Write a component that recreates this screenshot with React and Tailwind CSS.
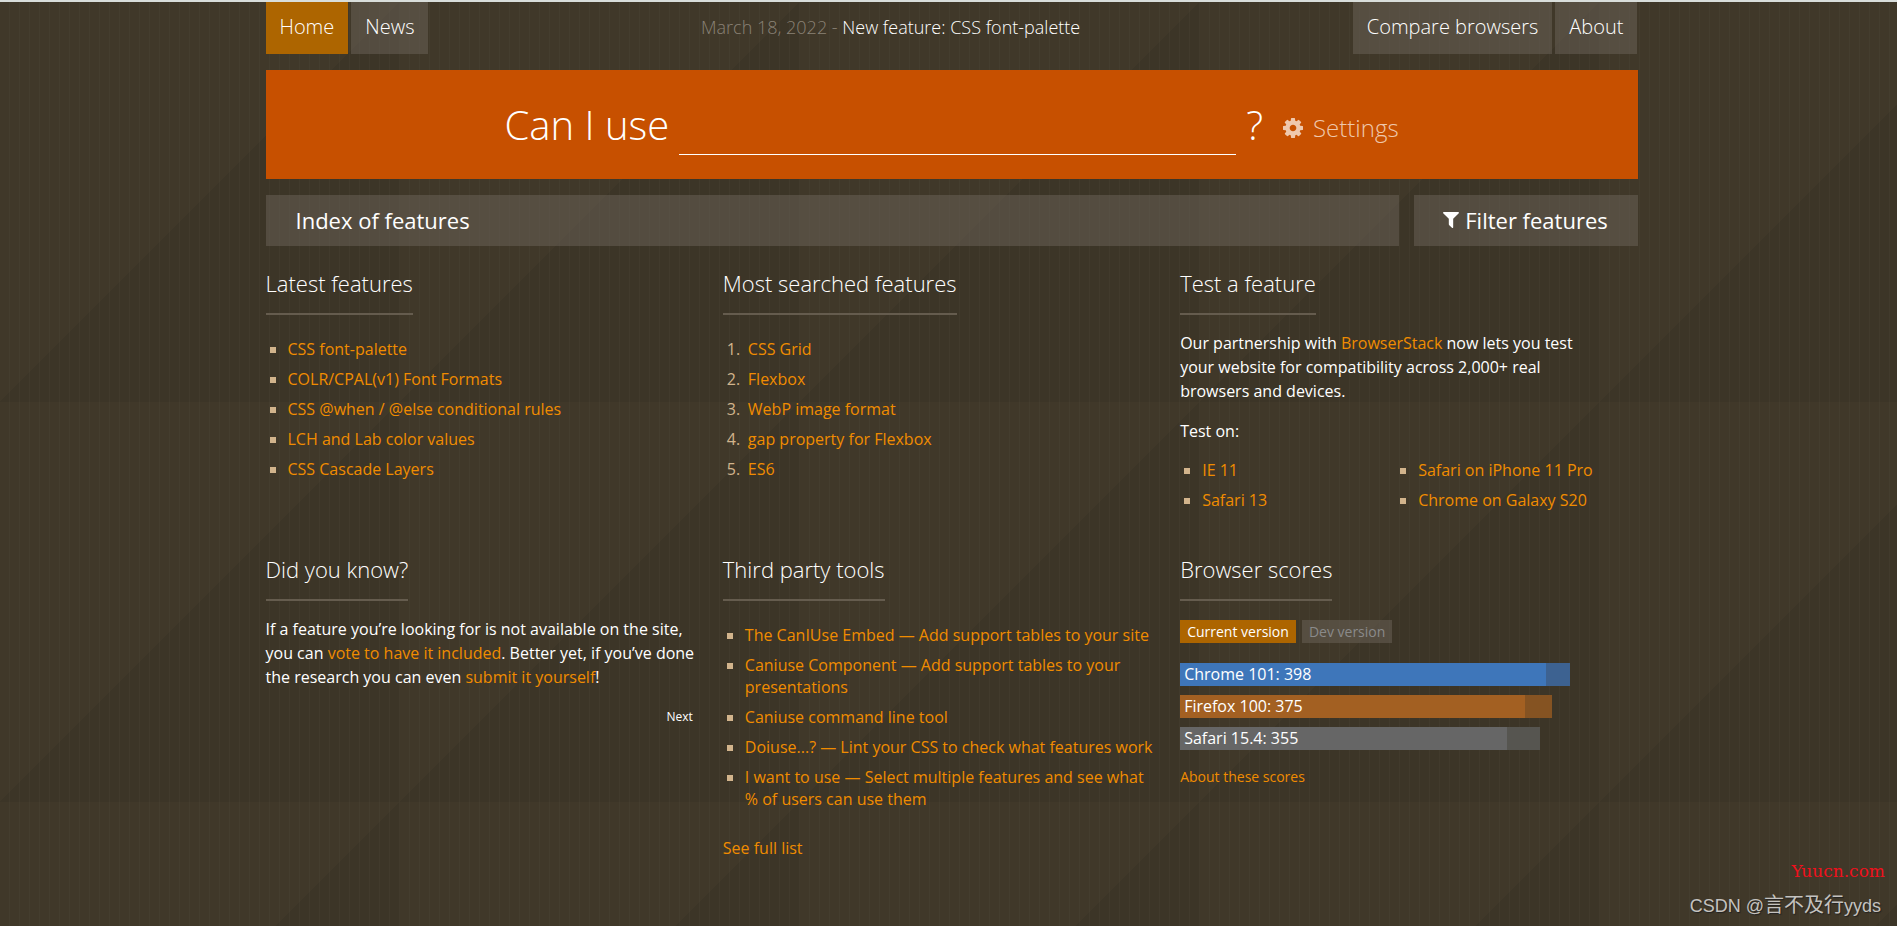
const latest = [
  "CSS font-palette",
  "COLR/CPAL(v1) Font Formats",
  "CSS @when / @else conditional rules",
  "LCH and Lab color values",
  "CSS Cascade Layers",
];
const searched = ["CSS Grid", "Flexbox", "WebP image format", "gap property for Flexbox", "ES6"];
const testOn = [
  ["IE 11", "Safari 13"],
  ["Safari on iPhone 11 Pro", "Chrome on Galaxy S20"],
];
const tools = [
  "The CanIUse Embed — Add support tables to your site",
  "Caniuse Component — Add support tables to your presentations",
  "Caniuse command line tool",
  "Doiuse...? — Lint your CSS to check what features work",
  "I want to use — Select multiple features and see what % of users can use them",
];
const scores = [
  { label: "Chrome 101: 398", now: 366, total: 390, bar: "bg-[#3e76ba]", rest: "bg-[#3d6291]" },
  { label: "Firefox 100: 375", now: 345, total: 372, bar: "bg-[#a36022]", rest: "bg-[#855322]" },
  { label: "Safari 15.4: 355", now: 327, total: 360, bar: "bg-[#666666]", rest: "bg-[#565550]" },
];

function GearIcon() {
  return (
    <svg viewBox="128 128 1536 1536" className="size-5" fill="currentColor" aria-hidden="true">
      <path d="M1152 896q0-106-75-181t-181-75-181 75-75 181 75 181 181 75 181-75 75-181zm512-109v222q0 12-8 23t-20 13l-185 28q-19 54-39 91 35 50 107 138 10 12 10 25t-9 23q-27 37-99 108t-94 71q-12 0-26-9l-138-108q-44 23-91 38-16 136-29 186-7 28-36 28h-222q-14 0-24.5-8.5t-11.5-21.5l-28-184q-49-16-90-37l-141 107q-10 9-25 9-14 0-25-11-126-114-165-168-7-10-7-23 0-12 8-23 15-21 51-66.5t54-70.5q-27-50-41-99l-183-27q-13-2-21-12.5t-8-23.5v-222q0-12 8-23t19-13l186-28q14-46 39-92-40-57-107-138-10-12-10-24 0-10 9-23 26-36 98.500-107.5t94.500-71.5q13 0 26 10l138 107q44-23 91-38 16-136 29-186 7-28 36-28h222q14 0 24.500 8.500t11.500 21.500l28 184q49 16 90 37l142-107q9-9 24-9 13 0 25 10 129 119 165 170 7 8 7 22 0 12-8 23-15 21-51 66.500t-54 70.500q26 50 41 98l183 28q13 2 21 12.500t8 23.500z" />
    </svg>
  );
}

function FunnelIcon() {
  return (
    <svg viewBox="192 256 1408 1408" className="size-4" fill="currentColor" aria-hidden="true">
      <path d="M1595 295q17 41-14 70l-493 493v742q0 42-39 59-13 5-25 5-27 0-45-19l-256-256q-19-19-19-45v-486l-493-493q-31-29-14-70 17-39 59-39h1280q42 0 59 39z" />
    </svg>
  );
}

function Link({ children }) {
  return (
    <a href="#" className="text-[#f08c00]">
      {children}
    </a>
  );
}

function Section({ title, children }) {
  return (
    <section>
      <h2 className="inline-block border-b-2 border-[#655c4e] pb-4 text-[22px] leading-7 font-light">{title}</h2>
      {children}
    </section>
  );
}

function Bullets({ items, className = "" }) {
  return (
    <ul className={`flex flex-col gap-2 leading-[22px] ${className}`}>
      {items.map((item) => (
        <li key={item} className="flex">
          <span className="mt-[9px] mr-3 ml-1 size-1.5 shrink-0 bg-[#d2b48c]" />
          <span>
            <Link>{item}</Link>
          </span>
        </li>
      ))}
    </ul>
  );
}

function Tab({ children, active }) {
  return (
    <a
      href="#"
      className={`flex h-[52px] items-start px-3.5 pt-[11px] text-xl leading-7 font-light ${
        active ? "bg-[#ad6500]" : "bg-[#6b6359]/50"
      }`}
    >
      {children}
    </a>
  );
}

export default function App() {
  return (
    <div className="relative min-h-screen border-t-2 border-[#d9dedb] bg-[repeating-linear-gradient(90deg,transparent_0px_9px,#ffffff06_9px_10px),linear-gradient(135deg,#403829_50%,#3c3527_50%)] bg-[size:10px_10px,400px_400px] pl-1.5 font-['Open_Sans',sans-serif] text-base text-white">
      <div className="mx-auto w-[1372px] max-w-full">
        <header className="flex items-start justify-between">
          <nav className="flex gap-[3px]">
            <Tab active>Home</Tab>
            <Tab>News</Tab>
          </nav>
          <p className="pt-[11px] text-lg leading-7 font-light text-[#8a8276]">
            March 18, 2022 -{" "}
            <a href="#" className="text-white">
              New feature: CSS font-palette
            </a>
          </p>
          <nav className="flex gap-[3px]">
            <Tab>Compare browsers</Tab>
            <Tab>About</Tab>
          </nav>
        </header>

        <form className="mt-4 flex h-[109px] items-center justify-center bg-[#c75000]">
          <label htmlFor="search" className="text-[40px] leading-[54px] font-light">
            Can I use
          </label>
          <input
            id="search"
            type="text"
            className="ml-2.5 h-[60px] w-[557px] border-b border-white bg-transparent text-[40px] font-light outline-none"
          />
          <span className="ml-2.5 text-[40px] leading-[54px] font-light">?</span>
          <button type="button" className="ml-5 flex items-center gap-2.5 pt-1.5 text-2xl font-light text-[#efc8ac]">
            <GearIcon />
            Settings
          </button>
        </form>

        <div className="mt-4 flex gap-[15px]">
          <a href="#" className="flex-1 bg-[#6b6359]/50 px-[30px] pt-[11px] pb-3 text-[22px] leading-7">
            Index of features
          </a>
          <button
            type="button"
            className="flex w-56 items-center justify-center gap-1.5 bg-[#6b6359]/50 pt-[11px] pb-3 text-[22px] leading-7"
          >
            <FunnelIcon />
            Filter features
          </button>
        </div>

        <main className="mt-[23px] grid grid-cols-3">
          <Section title="Latest features">
            <Bullets items={latest} className="mt-[23px]" />
          </Section>
          <Section title="Most searched features">
            <ol className="mt-[23px] flex flex-col gap-2 leading-[22px]">
              {searched.map((item, i) => (
                <li key={item} className="flex">
                  <span className="w-[25px] pl-1 text-[#d2b48c]">{i + 1}.</span>
                  <Link>{item}</Link>
                </li>
              ))}
            </ol>
          </Section>
          <Section title="Test a feature">
            <p className="mt-4 max-w-[420px] leading-6">
              Our partnership with <Link>BrowserStack</Link> now lets you test your website for compatibility across
              2,000+ real browsers and devices.
            </p>
            <p className="mt-4 leading-6">Test on:</p>
            <div className="mt-4 grid grid-cols-[216px_1fr]">
              {testOn.map((items) => (
                <Bullets key={items[0]} items={items} />
              ))}
            </div>
          </Section>
        </main>

        <div className="mt-11 grid grid-cols-3">
          <Section title="Did you know?">
            <p className="mt-4 mr-4 leading-6">
              If a feature you’re looking for is not available on the site, you can{" "}
              <Link>vote to have it included</Link>. Better yet, if you’ve done the research you can even{" "}
              <Link>submit it yourself</Link>!
            </p>
            <div className="mt-[18px] mr-[30px] flex justify-end">
              <button type="button" className="text-xs leading-5">
                Next
              </button>
            </div>
          </Section>
          <Section title="Third party tools">
            <Bullets items={tools} className="mt-[23px] mr-[22px]" />
            <p className="mt-[26px]">
              <Link>See full list</Link>
            </p>
          </Section>
          <Section title="Browser scores">
            <div className="mt-[19px] flex gap-1.5 text-sm leading-[23px]">
              <button type="button" className="bg-[#ad6500] px-[7px]">
                Current version
              </button>
              <button type="button" className="bg-[#6b6359]/50 px-[7px] text-[#8a8a8a]">
                Dev version
              </button>
            </div>
            <div className="mt-5 flex flex-col gap-[9px]">
              {scores.map((s) => (
                <div key={s.label} className={`h-[23px] ${s.rest}`} style={{ width: s.total }}>
                  <div className={`h-full px-1 leading-[22px] ${s.bar}`} style={{ width: s.now }}>
                    {s.label}
                  </div>
                </div>
              ))}
            </div>
            <p className="mt-[17px] text-sm leading-5">
              <Link>About these scores</Link>
            </p>
          </Section>
        </div>
      </div>

      <div className="absolute right-3 bottom-[43px] font-['DejaVu_Serif',serif] text-[17px] leading-6 text-[#f0101c]">
        Yuucn.com
      </div>
      <div className="absolute right-4 bottom-2 font-['Liberation_Sans','Noto_Sans_CJK_SC',sans-serif] text-lg leading-6 text-[#c4c2bf] [text-shadow:1px_1px_1px_#222]">
        CSDN @<span className="text-xl leading-6">言不及行</span>yyds
      </div>
    </div>
  );
}
